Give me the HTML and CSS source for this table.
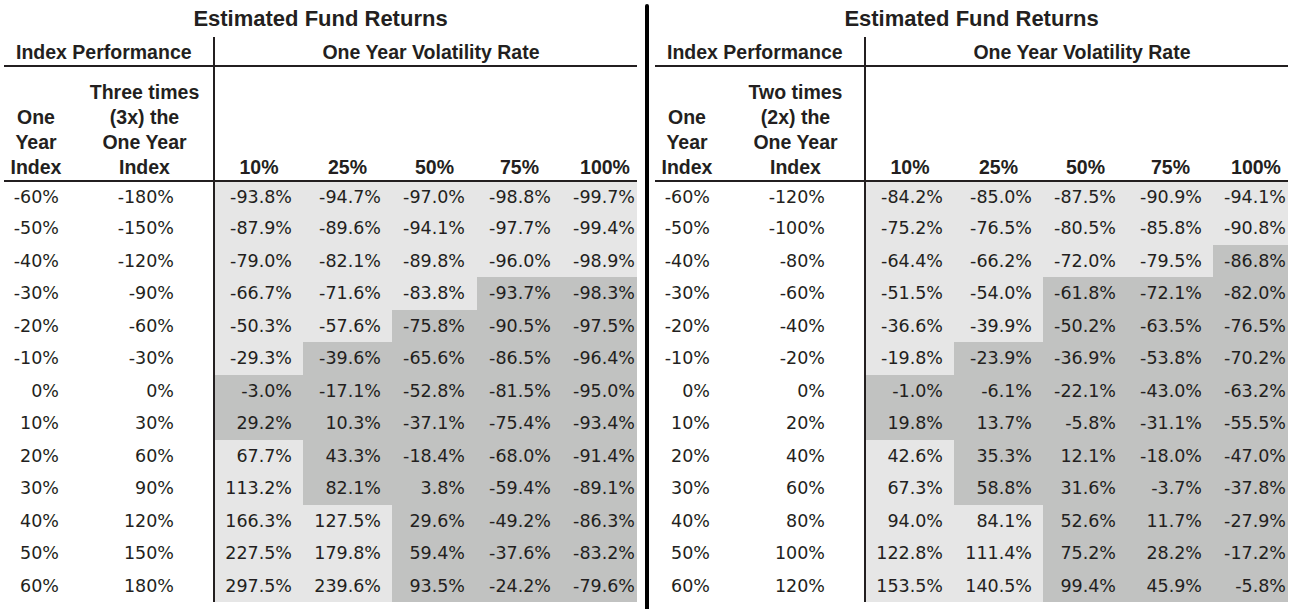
FILE: index.html
```html
<!DOCTYPE html>
<html lang="en">
<head>
<meta charset="utf-8">
<title>Estimated Fund Returns</title>
<link rel="stylesheet" href="styles.css">
</head>
<body>
<div class="page">
  <section class="panel">
    <div class="title">Estimated Fund Returns</div>
    <div class="vline"></div>
    <div class="hline h1"></div>
    <div class="hline h2"></div>
    <div class="grp grp-idx">Index Performance</div>
    <div class="grp grp-vol">One Year Volatility Rate</div>
    <div class="ch cha">One<br>Year<br>Index</div>
    <div class="ch chb">Three times<br>(3x) the<br>One Year<br>Index</div>
    <div class="ch">10%</div><div class="ch">25%</div><div class="ch">50%</div><div class="ch">75%</div><div class="ch ch5">100%</div>

    <div class="d da">-60%</div><div class="d db">-180%</div><div class="d c1 l">-93.8%</div><div class="d c2 l">-94.7%</div><div class="d c3 l">-97.0%</div><div class="d c4 l">-98.8%</div><div class="d c5 l">-99.7%</div>
    <div class="d da">-50%</div><div class="d db">-150%</div><div class="d c1 l">-87.9%</div><div class="d c2 l">-89.6%</div><div class="d c3 l">-94.1%</div><div class="d c4 l">-97.7%</div><div class="d c5 l">-99.4%</div>
    <div class="d da">-40%</div><div class="d db">-120%</div><div class="d c1 l">-79.0%</div><div class="d c2 l">-82.1%</div><div class="d c3 l">-89.8%</div><div class="d c4 l">-96.0%</div><div class="d c5 l">-98.9%</div>
    <div class="d da">-30%</div><div class="d db">-90%</div><div class="d c1 l">-66.7%</div><div class="d c2 l">-71.6%</div><div class="d c3 l">-83.8%</div><div class="d c4 k">-93.7%</div><div class="d c5 k">-98.3%</div>
    <div class="d da">-20%</div><div class="d db">-60%</div><div class="d c1 l">-50.3%</div><div class="d c2 l">-57.6%</div><div class="d c3 k">-75.8%</div><div class="d c4 k">-90.5%</div><div class="d c5 k">-97.5%</div>
    <div class="d da">-10%</div><div class="d db">-30%</div><div class="d c1 l">-29.3%</div><div class="d c2 k">-39.6%</div><div class="d c3 k">-65.6%</div><div class="d c4 k">-86.5%</div><div class="d c5 k">-96.4%</div>
    <div class="d da">0%</div><div class="d db">0%</div><div class="d c1 k">-3.0%</div><div class="d c2 k">-17.1%</div><div class="d c3 k">-52.8%</div><div class="d c4 k">-81.5%</div><div class="d c5 k">-95.0%</div>
    <div class="d da">10%</div><div class="d db">30%</div><div class="d c1 k">29.2%</div><div class="d c2 k">10.3%</div><div class="d c3 k">-37.1%</div><div class="d c4 k">-75.4%</div><div class="d c5 k">-93.4%</div>
    <div class="d da">20%</div><div class="d db">60%</div><div class="d c1 l">67.7%</div><div class="d c2 k">43.3%</div><div class="d c3 k">-18.4%</div><div class="d c4 k">-68.0%</div><div class="d c5 k">-91.4%</div>
    <div class="d da">30%</div><div class="d db">90%</div><div class="d c1 l">113.2%</div><div class="d c2 k">82.1%</div><div class="d c3 k">3.8%</div><div class="d c4 k">-59.4%</div><div class="d c5 k">-89.1%</div>
    <div class="d da">40%</div><div class="d db">120%</div><div class="d c1 l">166.3%</div><div class="d c2 l">127.5%</div><div class="d c3 k">29.6%</div><div class="d c4 k">-49.2%</div><div class="d c5 k">-86.3%</div>
    <div class="d da">50%</div><div class="d db">150%</div><div class="d c1 l">227.5%</div><div class="d c2 l">179.8%</div><div class="d c3 k">59.4%</div><div class="d c4 k">-37.6%</div><div class="d c5 k">-83.2%</div>
    <div class="d da">60%</div><div class="d db">180%</div><div class="d c1 l">297.5%</div><div class="d c2 l">239.6%</div><div class="d c3 k">93.5%</div><div class="d c4 k">-24.2%</div><div class="d c5 k">-79.6%</div>
  </section>

  <div class="divider"></div>

  <section class="panel">
    <div class="title">Estimated Fund Returns</div>
    <div class="vline"></div>
    <div class="hline h1"></div>
    <div class="hline h2"></div>
    <div class="grp grp-idx">Index Performance</div>
    <div class="grp grp-vol">One Year Volatility Rate</div>
    <div class="ch cha">One<br>Year<br>Index</div>
    <div class="ch chb">Two times<br>(2x) the<br>One Year<br>Index</div>
    <div class="ch">10%</div><div class="ch">25%</div><div class="ch">50%</div><div class="ch">75%</div><div class="ch ch5">100%</div>

    <div class="d da">-60%</div><div class="d db">-120%</div><div class="d c1 l">-84.2%</div><div class="d c2 l">-85.0%</div><div class="d c3 l">-87.5%</div><div class="d c4 l">-90.9%</div><div class="d c5 l">-94.1%</div>
    <div class="d da">-50%</div><div class="d db">-100%</div><div class="d c1 l">-75.2%</div><div class="d c2 l">-76.5%</div><div class="d c3 l">-80.5%</div><div class="d c4 l">-85.8%</div><div class="d c5 l">-90.8%</div>
    <div class="d da">-40%</div><div class="d db">-80%</div><div class="d c1 l">-64.4%</div><div class="d c2 l">-66.2%</div><div class="d c3 l">-72.0%</div><div class="d c4 l">-79.5%</div><div class="d c5 k">-86.8%</div>
    <div class="d da">-30%</div><div class="d db">-60%</div><div class="d c1 l">-51.5%</div><div class="d c2 l">-54.0%</div><div class="d c3 k">-61.8%</div><div class="d c4 k">-72.1%</div><div class="d c5 k">-82.0%</div>
    <div class="d da">-20%</div><div class="d db">-40%</div><div class="d c1 l">-36.6%</div><div class="d c2 l">-39.9%</div><div class="d c3 k">-50.2%</div><div class="d c4 k">-63.5%</div><div class="d c5 k">-76.5%</div>
    <div class="d da">-10%</div><div class="d db">-20%</div><div class="d c1 l">-19.8%</div><div class="d c2 k">-23.9%</div><div class="d c3 k">-36.9%</div><div class="d c4 k">-53.8%</div><div class="d c5 k">-70.2%</div>
    <div class="d da">0%</div><div class="d db">0%</div><div class="d c1 k">-1.0%</div><div class="d c2 k">-6.1%</div><div class="d c3 k">-22.1%</div><div class="d c4 k">-43.0%</div><div class="d c5 k">-63.2%</div>
    <div class="d da">10%</div><div class="d db">20%</div><div class="d c1 k">19.8%</div><div class="d c2 k">13.7%</div><div class="d c3 k">-5.8%</div><div class="d c4 k">-31.1%</div><div class="d c5 k">-55.5%</div>
    <div class="d da">20%</div><div class="d db">40%</div><div class="d c1 l">42.6%</div><div class="d c2 k">35.3%</div><div class="d c3 k">12.1%</div><div class="d c4 k">-18.0%</div><div class="d c5 k">-47.0%</div>
    <div class="d da">30%</div><div class="d db">60%</div><div class="d c1 l">67.3%</div><div class="d c2 k">58.8%</div><div class="d c3 k">31.6%</div><div class="d c4 k">-3.7%</div><div class="d c5 k">-37.8%</div>
    <div class="d da">40%</div><div class="d db">80%</div><div class="d c1 l">94.0%</div><div class="d c2 l">84.1%</div><div class="d c3 k">52.6%</div><div class="d c4 k">11.7%</div><div class="d c5 k">-27.9%</div>
    <div class="d da">50%</div><div class="d db">100%</div><div class="d c1 l">122.8%</div><div class="d c2 l">111.4%</div><div class="d c3 k">75.2%</div><div class="d c4 k">28.2%</div><div class="d c5 k">-17.2%</div>
    <div class="d da">60%</div><div class="d db">120%</div><div class="d c1 l">153.5%</div><div class="d c2 l">140.5%</div><div class="d c3 k">99.4%</div><div class="d c4 k">45.9%</div><div class="d c5 k">-5.8%</div>
  </section>
</div>
</body>
</html>
```

FILE: styles.css
```css
* { box-sizing: border-box; }

html, body {
  margin: 0;
  padding: 0;
  background: #ffffff;
}

body {
  width: 1297px;
  height: 609px;
  overflow: hidden;
  color: #231f20;
  font-family: "Liberation Sans", Arial, sans-serif;
}

.page {
  display: flex;
  align-items: flex-start;
  padding-left: 4px;
  height: 609px;
}

.panel {
  display: grid;
  width: 633px;
  grid-template-columns: 64px 145px 2px 88px 89px 85px 85px 75px;
  grid-template-rows: 37px 28px 2px 113px 2px 30px repeat(12, 32.5px);
}

.divider {
  width: 4px;
  height: 605px;
  margin-top: 4px;
  margin-left: 8px;
  margin-right: 6px;
  background: #000000;
  border-radius: 2px 2px 0 0;
}

.title {
  grid-column: 1 / -1;
  grid-row: 1;
  text-align: center;
  font-weight: 700;
  font-size: 22px;
  line-height: 37px;
  white-space: nowrap;
}

.vline {
  grid-column: 3;
  grid-row: 2 / -1;
  background: #231f20;
}

.hline {
  grid-column: 1 / -1;
  background: #231f20;
}

.h1 { grid-row: 3; }
.h2 { grid-row: 5; }

.grp {
  font-weight: 700;
  font-size: 19.5px;
  line-height: 26px;
  padding-top: 2px;
  white-space: nowrap;
}

.grp-idx {
  grid-column: span 2;
  padding-left: 12px;
}

.grp-vol {
  grid-column: span 5;
  text-align: center;
  padding-left: 10px;
}

.ch {
  display: flex;
  flex-direction: column;
  justify-content: flex-end;
  align-items: center;
  text-align: center;
  font-weight: 700;
  font-size: 19.5px;
  line-height: 25px;
  white-space: nowrap;
}

.chb { padding-left: 8px; }
.ch5 { padding-left: 11px; }

.d {
  display: flex;
  align-items: center;
  justify-content: flex-end;
  font-family: "DejaVu Sans", "Liberation Sans", sans-serif;
  font-size: 17.5px;
  white-space: nowrap;
}

.da { padding-right: 9px; }
.db { padding-right: 39px; }
.c1 { padding-right: 11px; }
.c2 { padding-right: 11px; }
.c3 { padding-right: 12px; }
.c4 { padding-right: 11px; }
.c5 { padding-right: 2px; }

.l { background: #e6e6e6; }
.k { background: #c1c2c1; }
```
